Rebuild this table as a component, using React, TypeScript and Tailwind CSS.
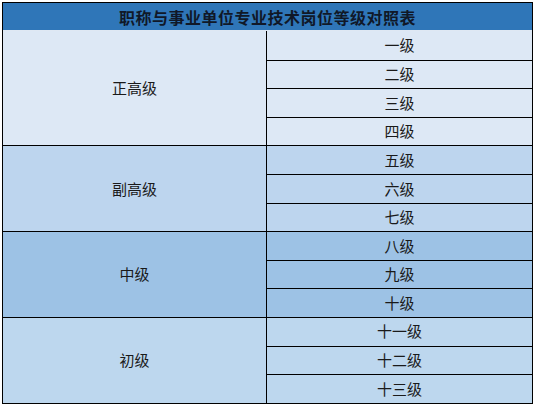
const groups = [
  { title: "正高级", levels: ["一级", "二级", "三级", "四级"], bg: "bg-[#dde8f5]" },
  { title: "副高级", levels: ["五级", "六级", "七级"], bg: "bg-[#bdd5ee]" },
  { title: "中级", levels: ["八级", "九级", "十级"], bg: "bg-[#9dc2e5]" },
  { title: "初级", levels: ["十一级", "十二级", "十三级"], bg: "bg-[#bdd7ee]" },
];

export default function App() {
  return (
    <div
      className="min-h-[405px] w-[535px] bg-white pl-[2px] pt-[2px]"
      style={{ fontFamily: '"Noto Sans CJK SC", "Noto Sans", sans-serif' }}
    >
      <div className="w-[531px] border border-black">
        <div className="flex h-[28px] items-center justify-center border-b border-[#dfe8f3] bg-[#2f76b8] text-[16px] font-bold tracking-[0.5px] text-[#101828]">
          职称与事业单位专业技术岗位等级对照表
        </div>
        {groups.map((group, gi) => (
          <div
            key={group.title}
            className={`flex ${group.bg} ${gi > 0 ? "border-t border-black" : ""}`}
          >
            <div className="flex w-[264px] items-center justify-center border-r border-black text-[15px] text-[#1a1a1a]">
              {group.title}
            </div>
            <div className="flex flex-1 flex-col">
              {group.levels.map((level, li) => (
                <div
                  key={level}
                  className={`flex items-center justify-center text-[15px] text-[#1a1a1a] ${
                    li > 0 ? "h-[28.6px] border-t border-black" : gi > 0 ? "h-[27.6px]" : "h-[28.6px]"
                  }`}
                >
                  {level}
                </div>
              ))}
            </div>
          </div>
        ))}
      </div>
    </div>
  );
}
